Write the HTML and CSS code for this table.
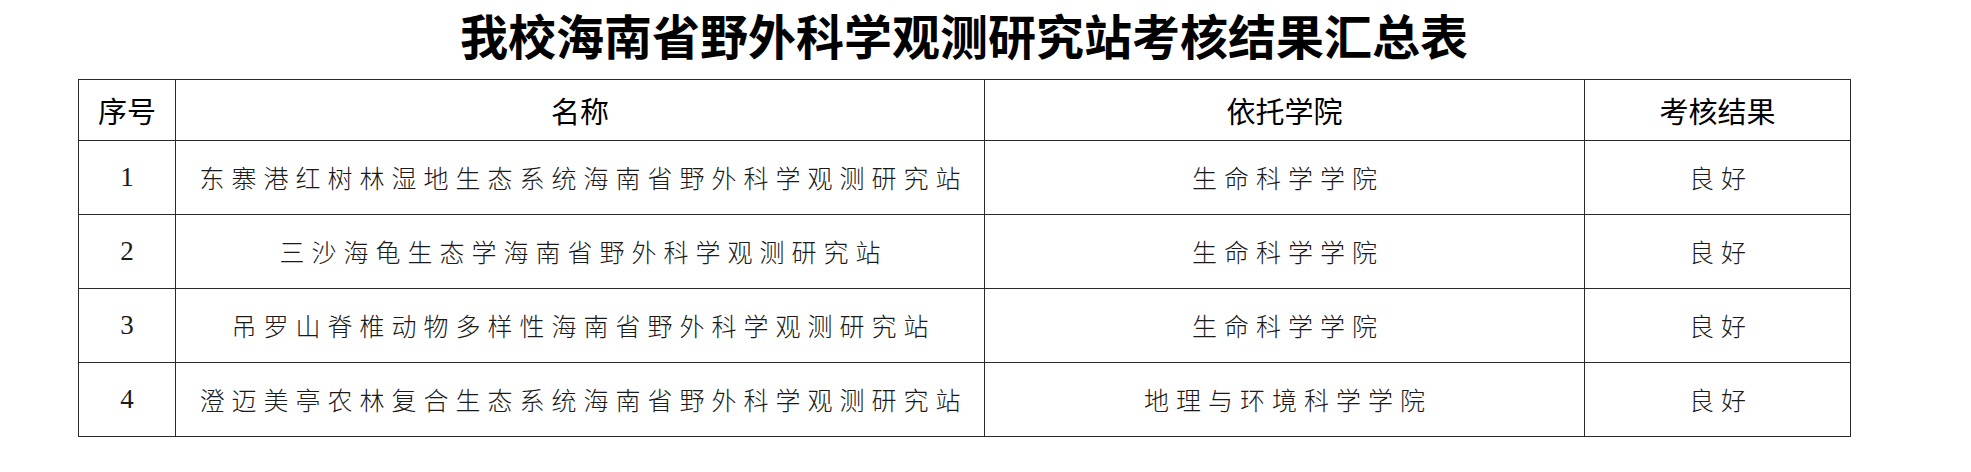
FILE: index.html
```html
<!DOCTYPE html>
<html lang="zh-CN">
<head>
<meta charset="utf-8">
<title>我校海南省野外科学观测研究站考核结果汇总表</title>
<link rel="stylesheet" href="styles.css">
</head>
<body>
<div class="sheet">
  <h1 class="title">我校海南省野外科学观测研究站考核结果汇总表</h1>
  <table class="grid">
    <colgroup>
      <col class="c-no">
      <col class="c-name">
      <col class="c-college">
      <col class="c-result">
    </colgroup>
    <thead>
      <tr class="head-row">
        <th>序号</th>
        <th>名称</th>
        <th>依托学院</th>
        <th>考核结果</th>
      </tr>
    </thead>
    <tbody>
      <tr class="row">
        <td class="num">1</td>
        <td class="txt">东寨港红树林湿地生态系统海南省野外科学观测研究站</td>
        <td class="txt">生命科学学院</td>
        <td class="txt">良好</td>
      </tr>
      <tr class="row">
        <td class="num">2</td>
        <td class="txt">三沙海龟生态学海南省野外科学观测研究站</td>
        <td class="txt">生命科学学院</td>
        <td class="txt">良好</td>
      </tr>
      <tr class="row">
        <td class="num">3</td>
        <td class="txt">吊罗山脊椎动物多样性海南省野外科学观测研究站</td>
        <td class="txt">生命科学学院</td>
        <td class="txt">良好</td>
      </tr>
      <tr class="row">
        <td class="num">4</td>
        <td class="txt">澄迈美亭农林复合生态系统海南省野外科学观测研究站</td>
        <td class="txt">地理与环境科学学院</td>
        <td class="txt">良好</td>
      </tr>
    </tbody>
  </table>
</div>
</body>
</html>
```
FILE: styles.css
```css
html, body {
  margin: 0;
  padding: 0;
  background: #ffffff;
}

body {
  font-family: "Noto Sans CJK SC", "Noto Sans", sans-serif;
  color: #111111;
}

.sheet {
  width: 1772px;
  margin-left: 78px;
  padding-top: 6px;
}

.title {
  margin: 0 0 17px 0;
  font-size: 48px;
  line-height: 56px;
  font-weight: 700;
  text-align: center;
  color: #000000;
  letter-spacing: 0;
}

.grid {
  width: 1772px;
  border-collapse: collapse;
  table-layout: fixed;
}

.c-no { width: 97px; }
.c-name { width: 809px; }
.c-college { width: 600px; }
.c-result { width: 266px; }

.grid th,
.grid td {
  border: 1px solid #2a2a2a;
  padding: 0;
  text-align: center;
  vertical-align: middle;
}

.head-row {
  height: 61px;
}

.grid th {
  font-size: 29px;
  font-weight: 400;
  color: #000000;
  line-height: 1;
}

.row {
  height: 74px;
}

.txt {
  font-size: 25px;
  font-weight: 300;
  letter-spacing: 7px;
  text-indent: 7px;
  line-height: 1;
  color: #1a1a1a;
}

.num {
  font-family: "Liberation Serif", "Times New Roman", serif;
  font-size: 27px;
  line-height: 1;
  color: #1a1a1a;
}
```
